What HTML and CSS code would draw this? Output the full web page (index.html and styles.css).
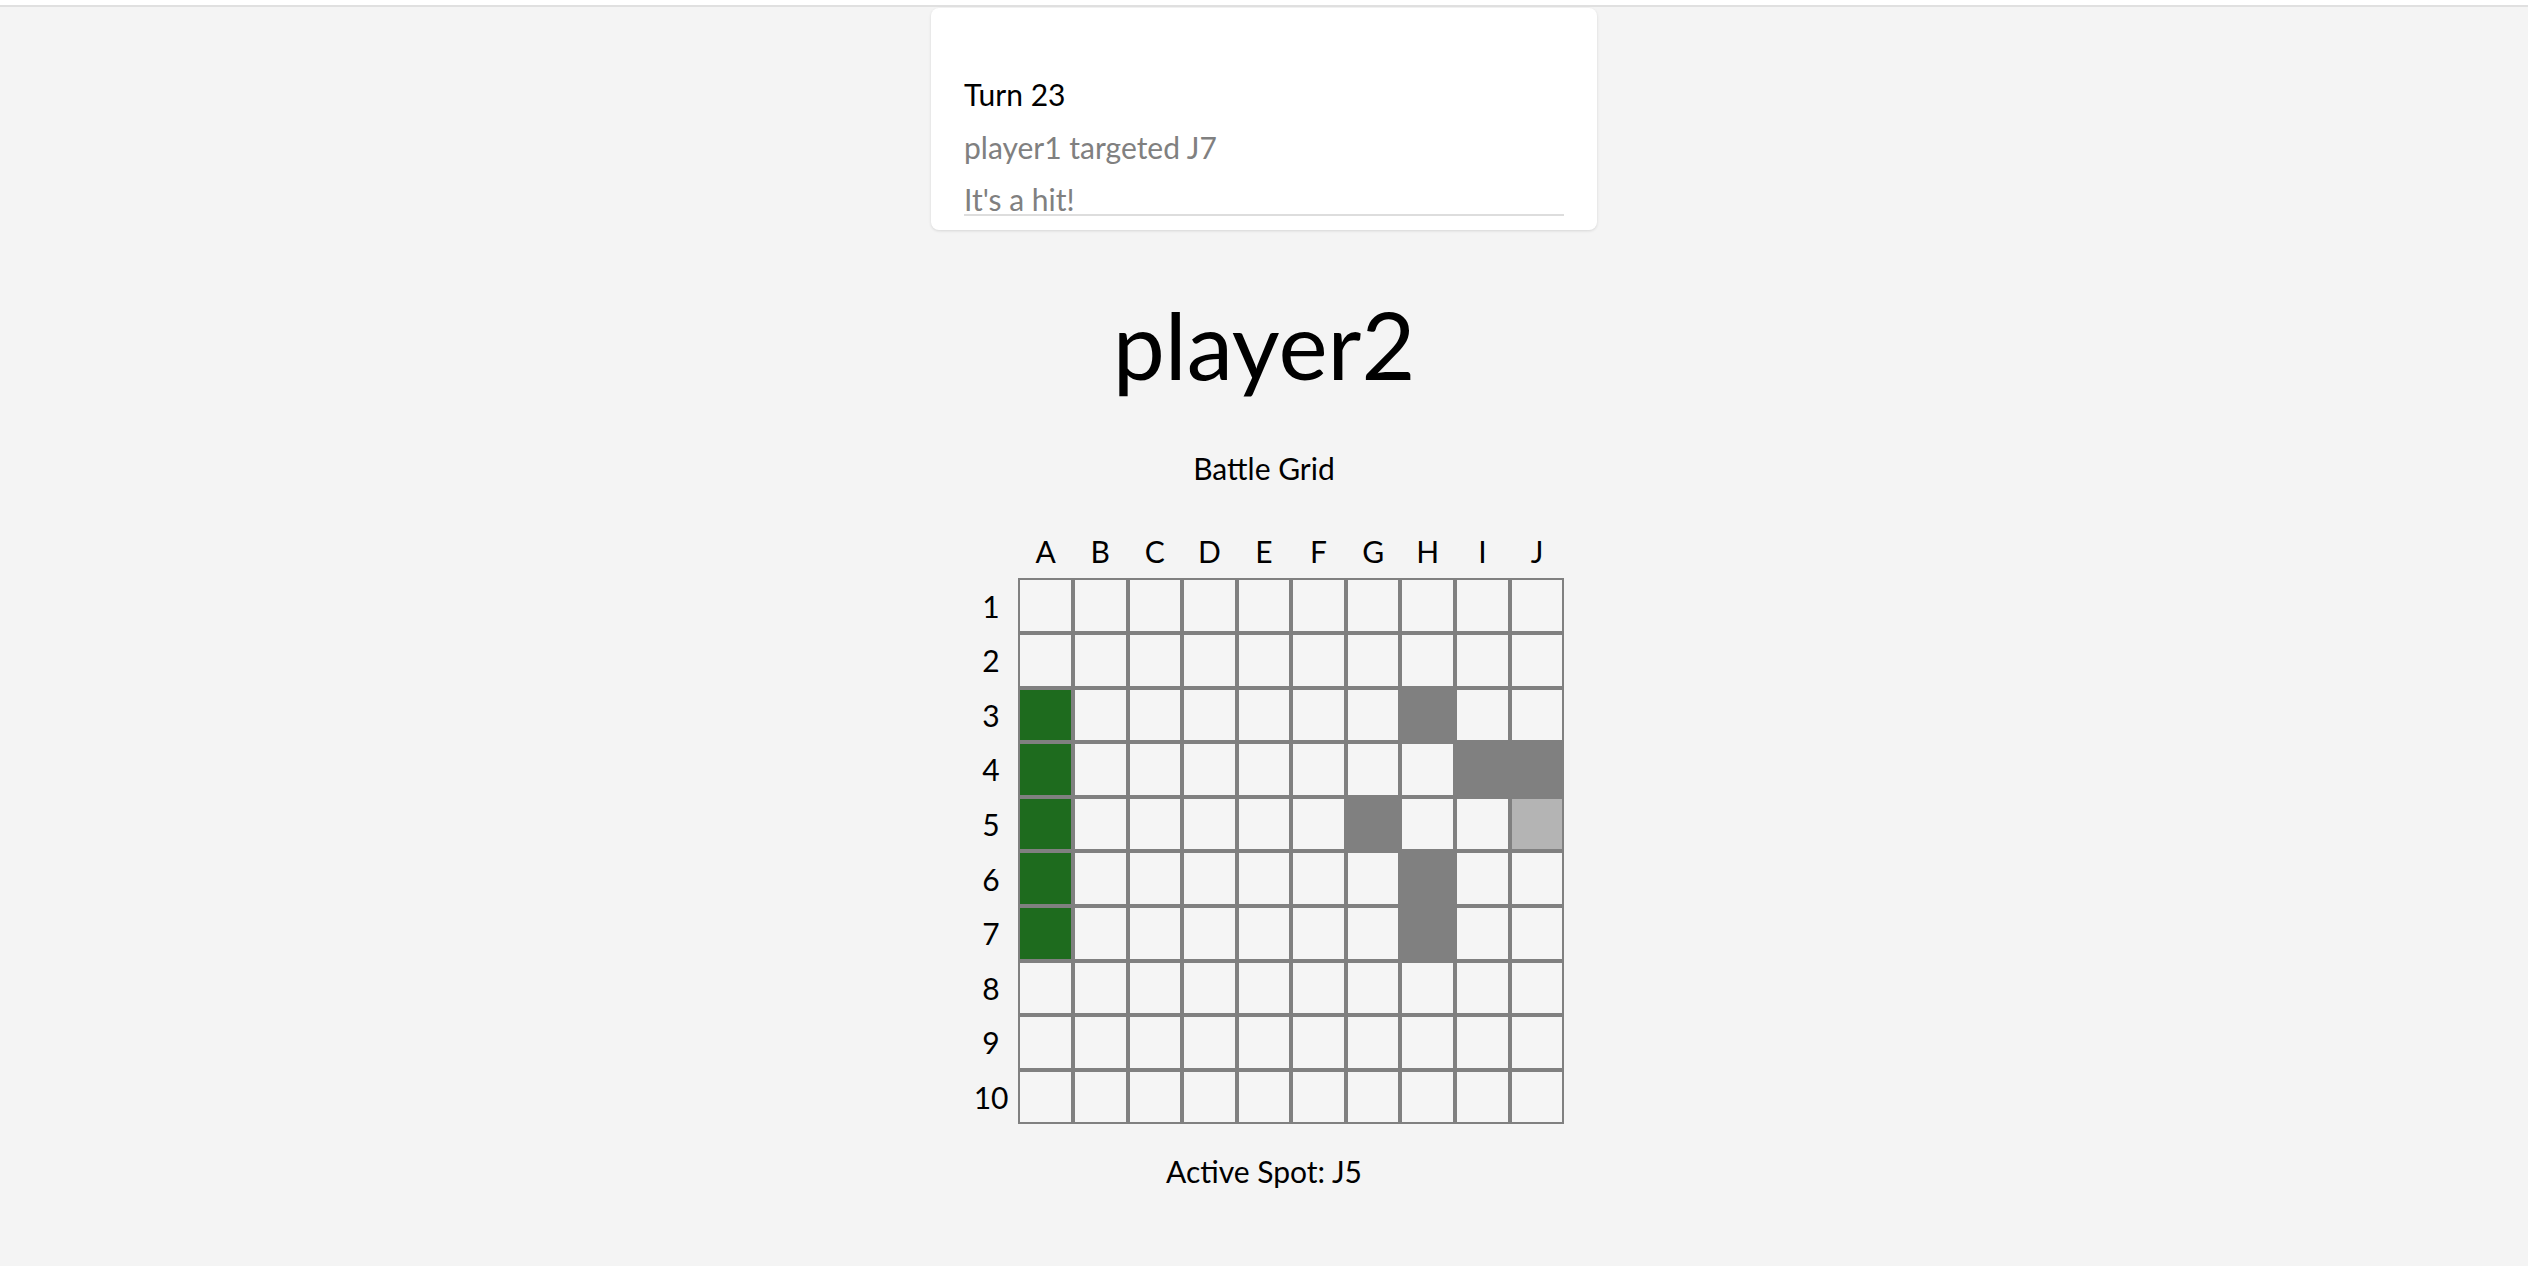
FILE: index.html
```html
<!DOCTYPE html>
<html lang="en">
<head>
<meta charset="utf-8">
<title>Battleship - player2</title>
<link rel="stylesheet" href="styles.css">
</head>
<body>
<div class="topbar"></div>
<main class="page">
  <section class="log-card">
    <ul class="log">
      <li class="log-turn">Turn 23</li>
      <li class="log-msg">player1 targeted J7</li>
      <li class="log-msg">It's a hit!</li>
    </ul>
  </section>

  <h1 class="player-name">player2</h1>
  <p class="grid-title">Battle Grid</p>

  <div class="board">
    <div class="corner"></div>
    <div class="col-label">A</div><div class="col-label">B</div><div class="col-label">C</div><div class="col-label">D</div><div class="col-label">E</div><div class="col-label">F</div><div class="col-label">G</div><div class="col-label">H</div><div class="col-label">I</div><div class="col-label">J</div>

    <div class="row-label">1</div>
    <div class="cell"></div><div class="cell"></div><div class="cell"></div><div class="cell"></div><div class="cell"></div><div class="cell"></div><div class="cell"></div><div class="cell"></div><div class="cell"></div><div class="cell"></div>

    <div class="row-label">2</div>
    <div class="cell"></div><div class="cell"></div><div class="cell"></div><div class="cell"></div><div class="cell"></div><div class="cell"></div><div class="cell"></div><div class="cell"></div><div class="cell"></div><div class="cell"></div>

    <div class="row-label">3</div>
    <div class="cell ship"></div><div class="cell"></div><div class="cell"></div><div class="cell"></div><div class="cell"></div><div class="cell"></div><div class="cell"></div><div class="cell miss"></div><div class="cell"></div><div class="cell"></div>

    <div class="row-label">4</div>
    <div class="cell ship"></div><div class="cell"></div><div class="cell"></div><div class="cell"></div><div class="cell"></div><div class="cell"></div><div class="cell"></div><div class="cell"></div><div class="cell miss"></div><div class="cell miss"></div>

    <div class="row-label">5</div>
    <div class="cell ship"></div><div class="cell"></div><div class="cell"></div><div class="cell"></div><div class="cell"></div><div class="cell"></div><div class="cell miss"></div><div class="cell"></div><div class="cell"></div><div class="cell active"></div>

    <div class="row-label">6</div>
    <div class="cell ship"></div><div class="cell"></div><div class="cell"></div><div class="cell"></div><div class="cell"></div><div class="cell"></div><div class="cell"></div><div class="cell miss"></div><div class="cell"></div><div class="cell"></div>

    <div class="row-label">7</div>
    <div class="cell ship"></div><div class="cell"></div><div class="cell"></div><div class="cell"></div><div class="cell"></div><div class="cell"></div><div class="cell"></div><div class="cell miss"></div><div class="cell"></div><div class="cell"></div>

    <div class="row-label">8</div>
    <div class="cell"></div><div class="cell"></div><div class="cell"></div><div class="cell"></div><div class="cell"></div><div class="cell"></div><div class="cell"></div><div class="cell"></div><div class="cell"></div><div class="cell"></div>

    <div class="row-label">9</div>
    <div class="cell"></div><div class="cell"></div><div class="cell"></div><div class="cell"></div><div class="cell"></div><div class="cell"></div><div class="cell"></div><div class="cell"></div><div class="cell"></div><div class="cell"></div>

    <div class="row-label">10</div>
    <div class="cell"></div><div class="cell"></div><div class="cell"></div><div class="cell"></div><div class="cell"></div><div class="cell"></div><div class="cell"></div><div class="cell"></div><div class="cell"></div><div class="cell"></div>
  </div>

  <p class="active-spot">Active Spot: J5</p>
</main>
</body>
</html>
```

FILE: styles.css
```css
html, body {
  margin: 0;
  padding: 0;
}

body {
  background: #f4f4f4;
  font-family: Lato, "Open Sans", "Liberation Sans", sans-serif;
  color: #000;
  min-height: 1266px;
}

.topbar {
  height: 5px;
  background: #ffffff;
  border-bottom: 2px solid #e0e0e0;
}

.page {
  display: flex;
  flex-direction: column;
  align-items: center;
}

.log-card {
  margin-top: 1px;
  width: 666px;
  box-sizing: border-box;
  padding: 0 33px 14px;
  background: #ffffff;
  border-radius: 8px;
  box-shadow: 0 1px 3px rgba(0, 0, 0, 0.12);
}

.log {
  list-style: none;
  margin: 0;
  padding: 71.4px 0 0;
  border-bottom: 2px solid #dddddd;
}

.log li {
  font-size: 30px;
  line-height: 30px;
  white-space: nowrap;
  margin-bottom: 22.5px;
}

.log li:last-child {
  margin-bottom: 0;
}

.log-turn {
  color: #000;
}

.log-msg {
  color: #808080;
}

.player-name {
  margin: 58px 0 0;
  font-size: 93px;
  font-weight: 400;
  line-height: 112px;
}

.grid-title {
  margin: 47.4px 0 0;
  font-size: 30px;
  line-height: 40px;
}

.board {
  margin-top: 36px;
  display: grid;
  grid-template-columns: repeat(11, 54.6px);
  grid-template-rows: repeat(11, 54.6px);
}

.col-label,
.row-label {
  display: flex;
  align-items: center;
  justify-content: center;
  font-size: 30px;
}

.cell {
  box-sizing: border-box;
  border: 2px solid #808080;
  background: #f5f5f5;
}

.cell.ship {
  background: #1e6b1e;
}

.cell.miss {
  background: #808080;
}

.cell.active {
  background: #b4b4b4;
}

.active-spot {
  margin: 26.4px 0 0;
  font-size: 30px;
  line-height: 40px;
}
```
